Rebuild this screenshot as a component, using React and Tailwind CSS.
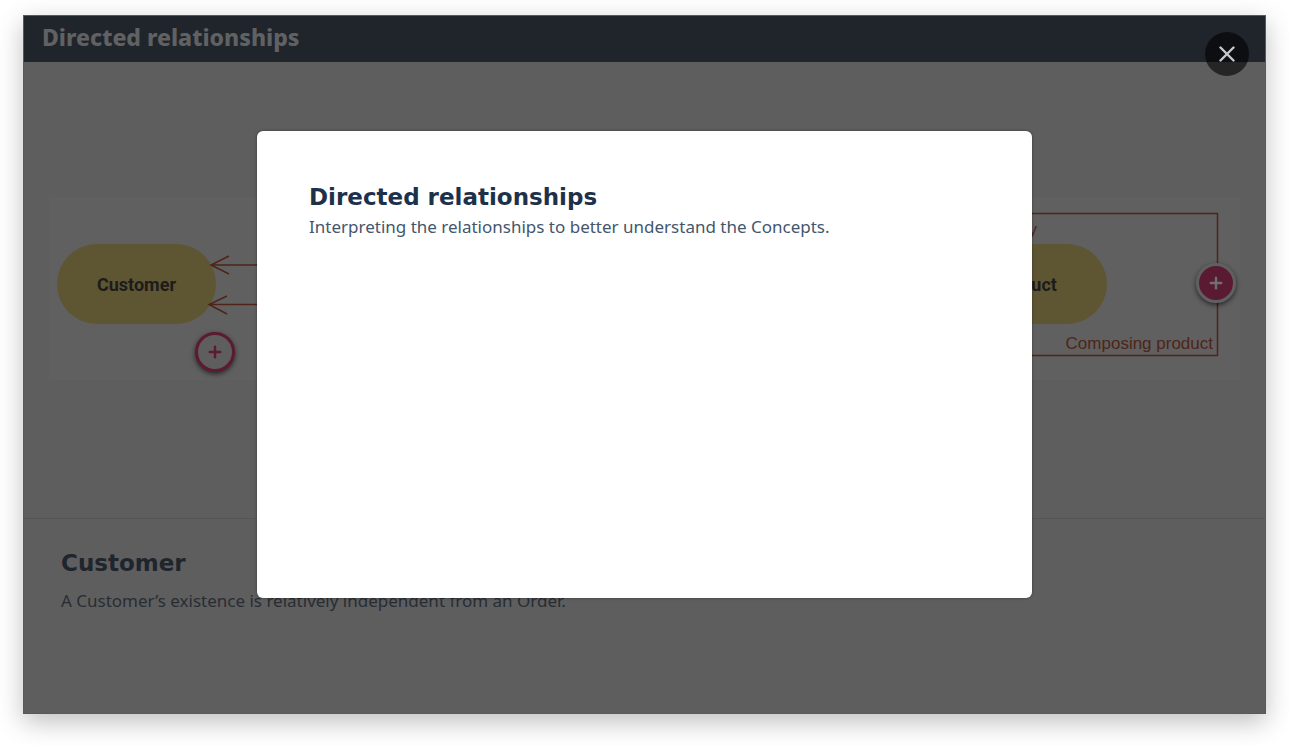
import { Plus } from "lucide-react";

function Diagram() {
  return (
    <div className="relative w-full bg-[#606060]">
      <svg viewBox="0 0 1191 183" className="block w-full" role="img" aria-label="Relationships between Customer and Product">
        <rect x="8" y="47" width="159" height="80" rx="40" fill="#5e5533" />
        <rect x="899" y="47" width="159" height="80" rx="40" fill="#5e5533" />
        <g fill="none" stroke="#4e2518" strokeWidth="1.5">
          <path d="M162 68H900M180 59L162 68L180 77" />
          <path d="M160 107.500H900M178 99L160 107.500L178 117" />
          <path d="M940 16.500H1168.500V158.500H940" />
        </g>
        <g fontFamily="Roboto, sans-serif" fontSize="18" fontWeight="700" fill="#1c1c1b" textAnchor="middle">
          <text x="87.500" y="94">Customer</text>
          <text x="976" y="94">Product</text>
        </g>
        <g fontFamily="'Liberation Sans', Arial, sans-serif" fontSize="17" fill="#4e2518" textAnchor="end">
          <text x="988" y="38">y</text>
          <text x="1164" y="152">Composing product</text>
        </g>
      </svg>
      <button
        type="button"
        aria-label="About Customer"
        className="absolute left-[13.900%] top-[84.700%] flex size-10 -translate-x-1/2 -translate-y-1/2 items-center justify-center rounded-full border-[3px] border-[#5c1a33] bg-[#5e5e5e] text-[#5c1a33] shadow-[0_2px_5px_rgba(0,0,0,0.6)]"
      >
        <Plus size={18} strokeWidth={3.2} />
      </button>
      <button
        type="button"
        aria-label="About Composing product"
        className="absolute left-[98%] top-[47%] flex size-10 -translate-x-1/2 -translate-y-1/2 items-center justify-center rounded-full border-[3px] border-[#606060] bg-[#5a1a32] text-[#707070] shadow-[0_2px_5px_rgba(0,0,0,0.6)]"
      >
        <Plus size={18} strokeWidth={3.2} />
      </button>
    </div>
  );
}

export default function App() {
  return (
    <main className="bg-white px-[23px] pt-[15px] pb-[31px] font-['Noto_Sans',sans-serif]">
      <div className="relative border border-[#595959] bg-[#5e5e5e] shadow-[0_8px_24px_rgba(0,0,0,0.25)]">
        <header className="flex h-[46px] items-center bg-[#20252c] px-[18px] pb-1">
          <h1 className="text-[23px] leading-8 font-extrabold text-[#606162]">Directed relationships</h1>
        </header>
        <section className="flex min-h-[457px] items-center border-b border-[#555555] px-[25px] pb-1">
          <Diagram />
        </section>
        <section className="min-h-[194px] px-[37px] pt-7 text-[#1f252d]">
          <h2 className="font-['DejaVu_Sans',Verdana,sans-serif] text-[23px] leading-8 font-bold">Customer</h2>
          <p className="mt-2 text-[17px] leading-7 text-[#282d34]">A Customer’s existence is relatively independent from an Order.</p>
        </section>

        <div className="absolute inset-0 flex items-center justify-center">
          <div
            role="dialog"
            aria-labelledby="dialog-title"
            className="min-h-[467px] w-full max-w-[775px] rounded-md bg-white px-[52px] py-[50px] shadow-[0_0_3px_rgba(0,0,0,0.4)]"
          >
            <h2 id="dialog-title" className="font-['DejaVu_Sans',Verdana,sans-serif] text-[23px] leading-8 font-bold text-[#1d314b]">
              Directed relationships
            </h2>
            <p className="text-[17px] leading-7 text-[#44566c]">Interpreting the relationships to better understand the Concepts.</p>
          </div>
          <button
            type="button"
            aria-label="Close"
            className="absolute top-4 right-4 flex size-11 items-center justify-center rounded-full bg-black/60 text-[#c8c8c8]"
          >
            <svg viewBox="0 0 16 16" className="size-4" fill="none" stroke="currentColor" strokeWidth="2.4" strokeLinecap="round">
              <path d="M1.500 1.500L14.500 14.500M14.500 1.500L1.500 14.500" />
            </svg>
          </button>
        </div>
      </div>
    </main>
  );
}
